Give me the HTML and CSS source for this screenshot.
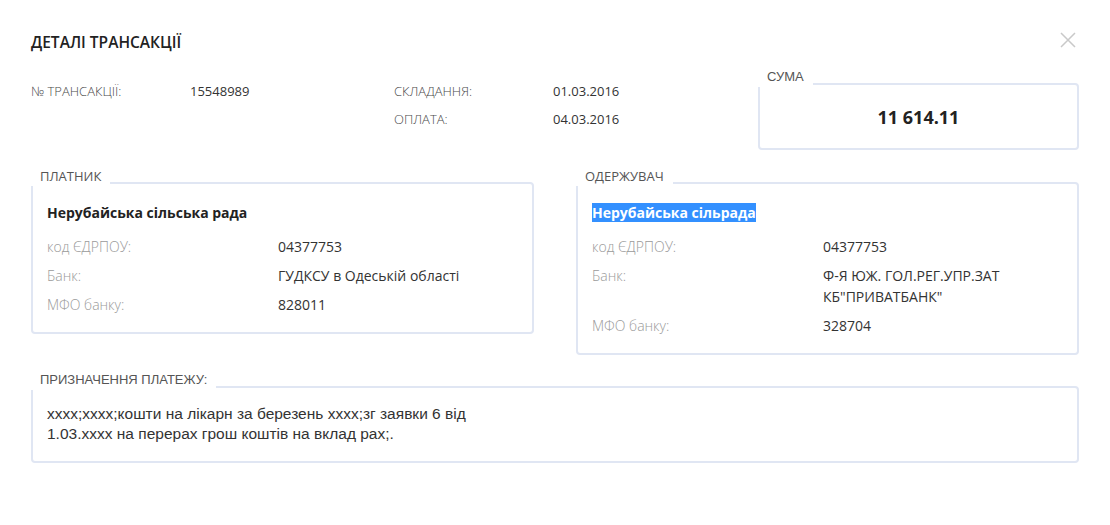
FILE: index.html
```html
<!DOCTYPE html>
<html lang="uk">
<head>
<meta charset="utf-8">
<title>Деталі трансакції</title>
<link rel="stylesheet" href="styles.css">
</head>
<body>
<div class="modal">
  <div class="header">
    <h1 class="title">ДЕТАЛІ ТРАНСАКЦІЇ</h1>
    <svg class="close" width="16" height="16" viewBox="0 0 16 16"><path d="M1 1 L15 15 M15 1 L1 15" stroke="#c9c9c9" stroke-width="1.5" fill="none"/></svg>
  </div>

  <div class="info">
    <div class="meta">
      <div class="meta-group">
        <div class="meta-row"><span class="meta-label">№ ТРАНСАКЦІЇ:</span><span class="meta-value">15548989</span></div>
      </div>
      <div class="meta-group">
        <div class="meta-row"><span class="meta-label">СКЛАДАННЯ:</span><span class="meta-value">01.03.2016</span></div>
        <div class="meta-row"><span class="meta-label">ОПЛАТА:</span><span class="meta-value">04.03.2016</span></div>
      </div>
    </div>
    <div class="box sum-box">
      <span class="legend legend-arial">СУМА</span>
      <div class="amount">11 614.11</div>
    </div>
  </div>

  <div class="parties">
    <div class="box party">
      <span class="legend">ПЛАТНИК</span>
      <div class="party-name">Нерубайська сільська рада</div>
      <div class="fields">
        <span class="f-label">код ЄДРПОУ:</span><span class="f-value">04377753</span>
        <span class="f-label">Банк:</span><span class="f-value">ГУДКСУ в Одеській області</span>
        <span class="f-label">МФО банку:</span><span class="f-value">828011</span>
      </div>
    </div>
    <div class="box party">
      <span class="legend">ОДЕРЖУВАЧ</span>
      <div class="party-name"><span class="selected">Нерубайська сільрада</span></div>
      <div class="fields">
        <span class="f-label">код ЄДРПОУ:</span><span class="f-value">04377753</span>
        <span class="f-label">Банк:</span><span class="f-value">Ф-Я ЮЖ. ГОЛ.РЕГ.УПР.ЗАТ<br>КБ"ПРИВАТБАНК"</span>
        <span class="f-label">МФО банку:</span><span class="f-value">328704</span>
      </div>
    </div>
  </div>

  <div class="box purpose">
    <span class="legend legend-arial">ПРИЗНАЧЕННЯ ПЛАТЕЖУ:</span>
    <div class="purpose-text">xxxx;xxxx;кошти на лікарн за березень xxxx;зг заявки 6 від<br>1.03.xxxx на перерах грош коштів на вклад рах;.</div>
  </div>
</div>
</body>
</html>
```

FILE: styles.css
```css
* { box-sizing: border-box; }

body {
  margin: 0;
  background: #fff;
  font-family: "Open Sans", "Noto Sans", sans-serif;
  color: #333;
}

.modal {
  width: 1110px;
  padding: 32px 31px 0 31px;
}

.header {
  display: flex;
  justify-content: space-between;
  align-items: center;
  height: 20px;
}

.title {
  margin: 0;
  font-size: 15.5px;
  font-weight: 600;
  line-height: 20px;
  color: #222;
}

.close {
  margin-right: 3px;
  margin-top: -4px;
}

.info {
  display: flex;
  justify-content: space-between;
  align-items: flex-start;
  margin-top: 29px;
}

.meta {
  display: flex;
}

.meta-group {
  width: 363px;
  display: flex;
  flex-direction: column;
  gap: 8px;
}

.meta-row {
  display: flex;
  font-size: 13px;
  line-height: 20px;
}

.meta-label {
  width: 159px;
  color: #4a4a4a;
  font-weight: 300;
}

.meta-value {
  color: #333;
}

.box {
  position: relative;
  border: 2px solid #e0e6f3;
  border-radius: 4px;
  background: #fff;
}

.legend {
  position: absolute;
  top: -16px;
  left: -2px;
  padding: 1px 9px 3px 9px;
  background: #fff;
  font-size: 13px;
  line-height: 14px;
  color: #555;
  white-space: nowrap;
}

.legend-arial {
  font-family: "Liberation Sans", Arial, sans-serif;
}

.sum-box {
  width: 321px;
  height: 67px;
  margin-top: 2px;
  display: flex;
  align-items: center;
  justify-content: center;
}

.amount {
  font-size: 18px;
  font-weight: 700;
  color: #222;
}

.parties {
  display: flex;
  justify-content: space-between;
  align-items: flex-start;
  margin-top: 32px;
}

.party {
  width: 503px;
  padding: 18px 14px 17px 14px;
}

.party-name {
  font-size: 14px;
  font-weight: 700;
  line-height: 21px;
  color: #222;
}

.selected {
  background: #3390ff;
  color: #fff;
}

.fields {
  display: grid;
  grid-template-columns: 231px 1fr;
  row-gap: 8px;
  margin-top: 13px;
  font-size: 14px;
  line-height: 21px;
}

.f-label {
  color: #9a9a9a;
  font-weight: 300;
}

.f-value {
  color: #333;
}

.purpose {
  margin-top: 31px;
  padding: 16px 14px 17px 14px;
}

.purpose-text {
  font-family: "Liberation Sans", Arial, sans-serif;
  font-size: 15.5px;
  line-height: 20px;
  color: #333;
}
```
